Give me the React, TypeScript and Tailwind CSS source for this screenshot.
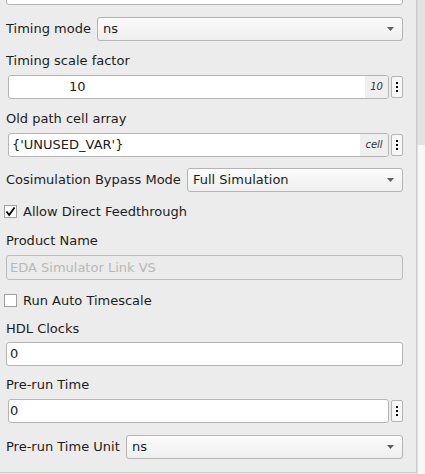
import React from "react";

const font = { fontFamily: '"DejaVu Sans", Verdana, sans-serif' };

function Select({ value }: { value: string }) {
  return (
    <div className="flex-1 h-[24px] border border-[#b4b4b4] rounded-[3px] bg-gradient-to-b from-[#fbfbfb] to-[#efefef] flex items-center pl-[5px] pr-[8px]">
      <span className="flex-1 text-[13px] text-[#1c1c1c]">{value}</span>
      <svg width="7" height="4" viewBox="0 0 7 4">
        <path d="M0 0 L7 0 L3.5 4 Z" fill="#606060" />
      </svg>
    </div>
  );
}

function DotsButton() {
  return (
    <div className="w-[12px] h-[22px] border border-[#b4b4b4] rounded-[2px] bg-[#f7f7f7] flex flex-col items-center justify-center gap-[2px]">
      <div className="w-[2px] h-[2px] bg-black" />
      <div className="w-[2px] h-[2px] bg-black" />
      <div className="w-[2px] h-[2px] bg-black" />
    </div>
  );
}

function Checkbox({ checked }: { checked?: boolean }) {
  return (
    <div className="w-[13px] h-[13px] border border-[#a0a0a0] bg-white flex items-center justify-center">
      {checked && (
        <svg width="11" height="11" viewBox="0 0 11 11">
          <path d="M1.5 5.5 L4.2 9 L9.5 1.5" stroke="#000" strokeWidth="1.8" fill="none" />
        </svg>
      )}
    </div>
  );
}

export default function App() {
  return (
    <div className="w-[425px] h-[474px] bg-[#ececec] flex overflow-hidden" style={font}>
      <div className="w-[417px] h-[473px] border-r border-b border-[#cbcbcb] overflow-hidden flex flex-col text-[13px] text-[#1c1c1c]">
        {/* cut-off input at top */}
        <div className="mt-[-19px] ml-[6px] w-[397px] h-[24px] border border-[#b4b4b4] rounded-[3px] bg-white" />

        {/* timing mode */}
        <div className="mt-[12px] ml-[6px] w-[397px] h-[24px] flex items-center">
          <span className="w-[91px]">Timing mode</span>
          <Select value="ns" />
        </div>

        <div className="mt-[11px] ml-[6px] h-[17px] leading-[17px]">Timing scale factor</div>

        <div className="mt-[6px] ml-[8px] w-[395px] h-[24px] flex items-center gap-[2px]">
          <div className="flex-1 h-[24px] border border-[#b4b4b4] rounded-[3px] bg-white flex overflow-hidden">
            <span className="flex-1 pl-[60px] leading-[22px]">10</span>
            <span className="w-[23px] bg-[#efefef] text-[10px] italic text-[#333] leading-[22px] text-center">10</span>
          </div>
          <DotsButton />
        </div>

        <div className="mt-[11px] ml-[6px] h-[17px] leading-[17px]">Old path cell array</div>

        <div className="mt-[6px] ml-[8px] w-[395px] h-[24px] flex items-center gap-[2px]">
          <div className="flex-1 h-[24px] border border-[#b4b4b4] rounded-[3px] bg-white flex overflow-hidden">
            <span className="flex-1 pl-[3px] leading-[22px]">{"{'UNUSED_VAR'}"}</span>
            <span className="w-[28px] bg-[#efefef] text-[10px] italic text-[#333] leading-[22px] text-center">cell</span>
          </div>
          <DotsButton />
        </div>

        {/* cosimulation */}
        <div className="mt-[11px] ml-[6px] w-[397px] h-[24px] flex items-center">
          <span className="w-[181px]">Cosimulation Bypass Mode</span>
          <Select value="Full Simulation" />
        </div>

        <div className="mt-[11px] ml-[4px] h-[17px] flex items-center gap-[6px]">
          <Checkbox checked />
          <span>Allow Direct Feedthrough</span>
        </div>

        <div className="mt-[12px] ml-[6px] h-[17px] leading-[17px]">Product Name</div>

        <div className="mt-[6px] ml-[6px] w-[397px] h-[25px] border border-[#bdbdbd] rounded-[3px] bg-[#ebebeb] pl-[3px] leading-[23px] text-[#b8b8b8]">
          EDA Simulator Link VS
        </div>

        <div className="mt-[12px] ml-[4px] h-[17px] flex items-center gap-[6px]">
          <Checkbox />
          <span>Run Auto Timescale</span>
        </div>

        <div className="mt-[11px] ml-[6px] h-[17px] leading-[17px]">HDL Clocks</div>

        <div className="mt-[5px] ml-[6px] w-[397px] h-[24px] border border-[#b4b4b4] rounded-[3px] bg-white pl-[3px] leading-[22px]">
          0
        </div>

        <div className="mt-[10px] ml-[6px] h-[17px] leading-[17px]">Pre-run Time</div>

        <div className="mt-[6px] ml-[8px] w-[395px] h-[24px] flex items-center gap-[2px]">
          <div className="flex-1 h-[24px] border border-[#b4b4b4] rounded-[3px] bg-white pl-[1px] leading-[22px]">0</div>
          <DotsButton />
        </div>

        <div className="mt-[12px] ml-[6px] w-[397px] h-[24px] flex items-center">
          <span className="w-[120px]">Pre-run Time Unit</span>
          <Select value="ns" />
        </div>
      </div>

      {/* scrollbar strip */}
      <div className="w-[8px] flex flex-col">
        <div className="h-[145px] bg-[#e2e2e2] border-l border-[#d8d8d8]" />
        <div className="flex-1 bg-[#f8f8f8] border-l border-[#e0e0e0]" />
      </div>
    </div>
  );
}
